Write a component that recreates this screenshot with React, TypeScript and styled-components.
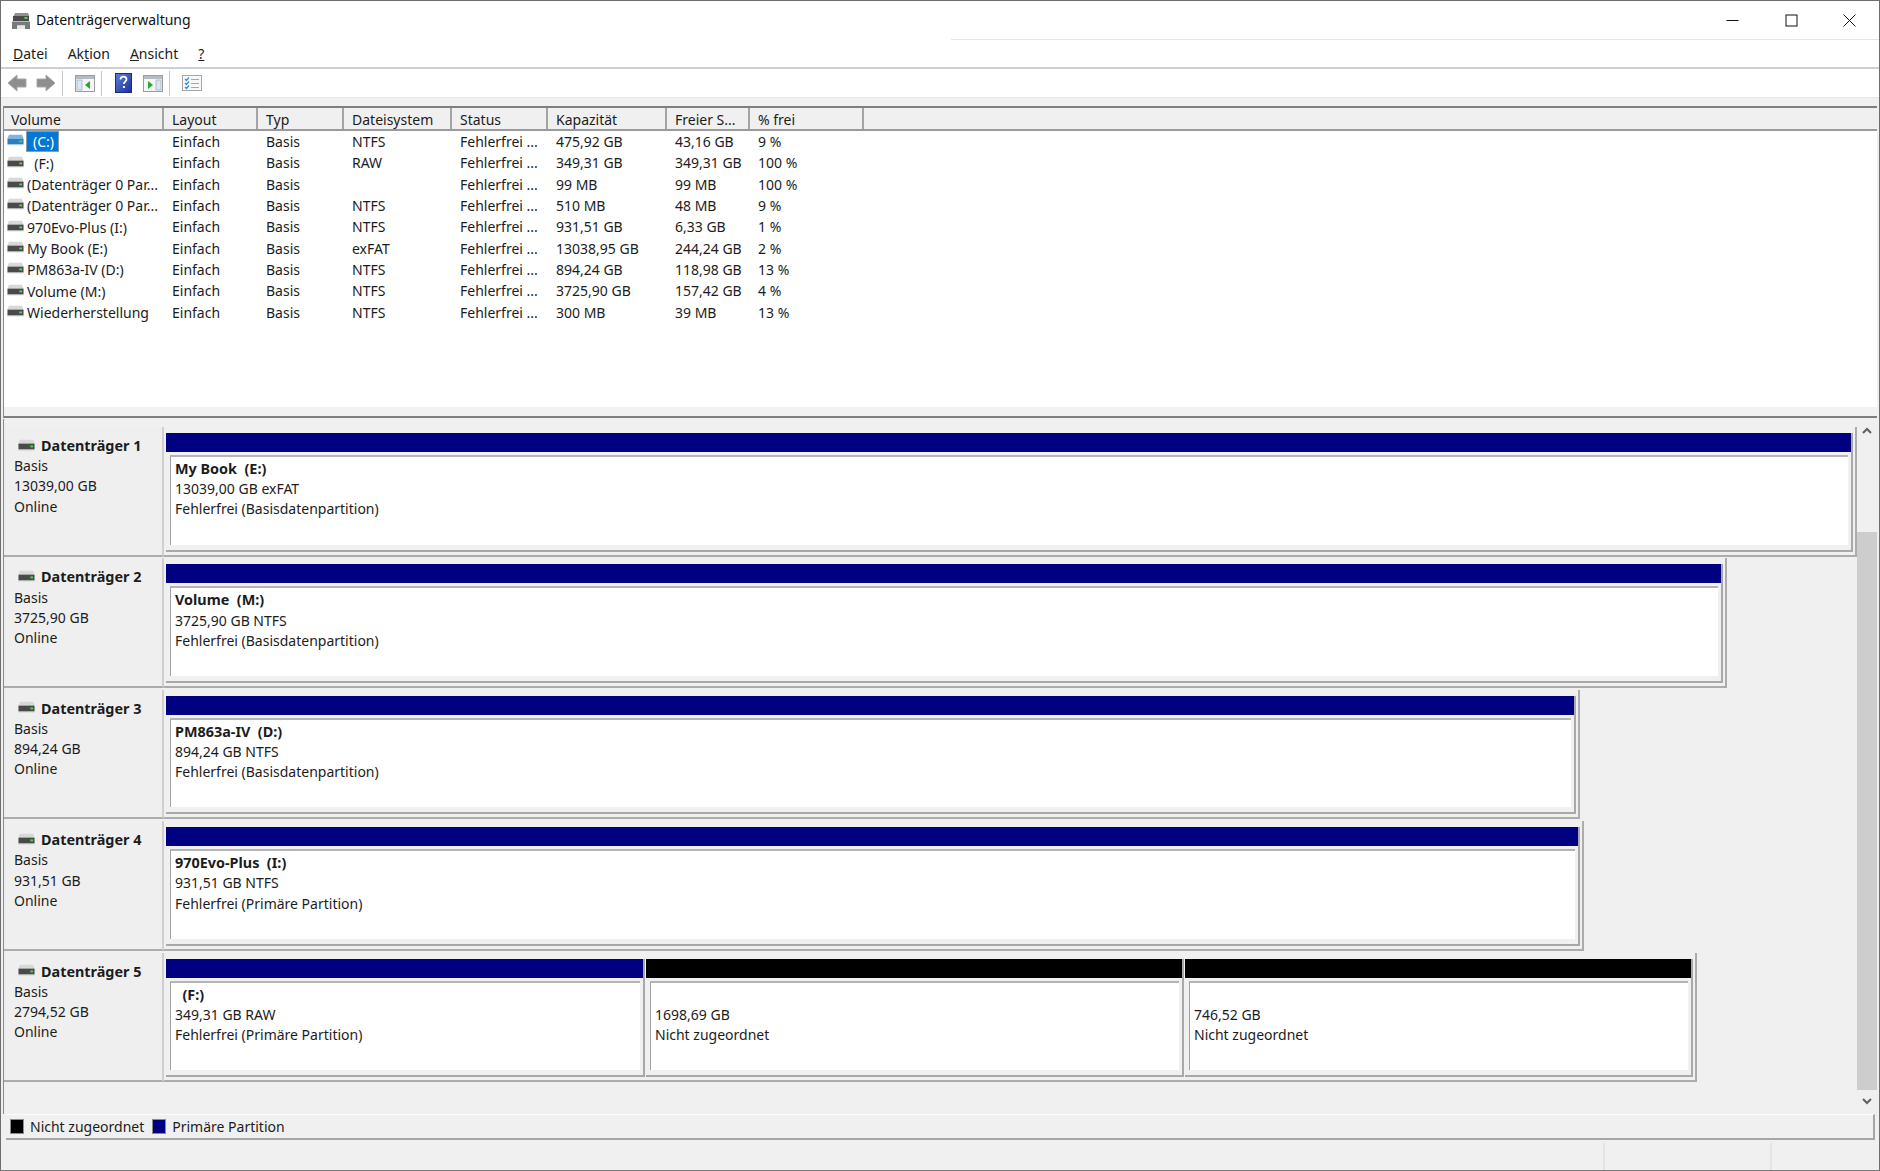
import styled, { createGlobalStyle } from 'styled-components'

const GlobalStyle = createGlobalStyle`
  html, body {
    margin: 0;
    padding: 0;
    background: #fff;
  }
  * {
    box-sizing: border-box;
  }
`

const COLUMNS = '160px 94px 86px 108px 96px 119px 83px 114px'

const Window = styled.div`
  width: 1880px;
  height: 1171px;
  display: flex;
  flex-direction: column;
  overflow: hidden;
  background: #f0f0f0;
  border: 1px solid #6e6e6e;
  border-bottom-color: #7a7a7a;
  font-family: 'Noto Sans', 'Open Sans', sans-serif;
  font-size: 14px;
  color: #1c1c1c;
`

const TitleBar = styled.div`
  height: 39px;
  flex: none;
  background: #fff;
  display: flex;
  align-items: center;
  padding-left: 10px;
`

const Title = styled.span`
  flex: 1;
  color: #111;
  margin-left: 5px;
  padding-bottom: 2px;
`

const WinButton = styled.div`
  width: 58.5px;
  height: 38px;
  display: flex;
  align-items: center;
  justify-content: center;
`

const MenuBar = styled.div`
  height: 29px;
  flex: none;
  background: #fff;
  display: flex;
  align-items: center;
  padding-left: 12px;
  border-bottom: 2px solid #cbd0d5;
`

const MenuItem = styled.span<{ $gap: number }>`
  margin-right: ${p => p.$gap}px;
`

const MenuRule = styled.div`
  margin-left: auto;
  margin-top: -1px;
  width: 928px;
  align-self: stretch;
  border-top: 1px solid #e6e6e6;
`

const Toolbar = styled.div`
  height: 29px;
  flex: none;
  background: #fff;
  display: flex;
  align-items: center;
  padding-left: 6px;
  border-bottom: 1px solid #e6e6e6;
`

const ToolIcon = styled.svg<{ $left?: number }>`
  display: block;
  flex: none;
  margin-left: ${p => p.$left ?? 0}px;
`

const ToolSep = styled.div<{ $left: number }>`
  width: 1px;
  height: 25px;
  flex: none;
  margin-left: ${p => p.$left}px;
  background: #c6c6c6;
`

const Content = styled.div`
  flex: 1;
  min-height: 0;
  display: flex;
  flex-direction: column;
  padding: 8px 2px 0 2px;
`

const ListPane = styled.div`
  height: 312px;
  flex: none;
  background: #fff;
  border-left: 1px solid #8a8a8a;
  border-bottom: 2px solid #7f7f7f;
  display: flex;
  flex-direction: column;
`

const Header = styled.div`
  display: grid;
  grid-template-columns: ${COLUMNS};
  height: 25px;
  flex: none;
  background: #f0f0f0;
  border-top: 2px solid #7f7f7f;
  border-bottom: 2px solid #9a9a9a;
`

const HeaderCell = styled.div`
  padding: 1px 0 0 8px;
  line-height: 22px;
  border-right: 2px solid #a4a4a4;
  white-space: nowrap;
  overflow: hidden;

  &:first-child {
    padding-left: 7px;
  }
`

const Row = styled.div`
  display: grid;
  grid-template-columns: ${COLUMNS};
  height: 21.35px;
  flex: none;
  line-height: 21px;
`

const VolumeCell = styled.div`
  display: flex;
  align-items: center;
  padding-left: 3px;
  gap: 3px;
  white-space: pre;
  overflow: hidden;
`

const Selected = styled.span`
  background: #0078d7;
  color: #fff;
  border: 1px solid #8f9aa3;
  margin-left: -1px;
  padding: 0 4px 0 6px;
  height: 21px;
  line-height: 19px;
`

const Cell = styled.div`
  padding-left: 8px;
  white-space: nowrap;
`

const FlatFill = styled.div`
  flex: 1;
  background: #fff;
`

const ListFoot = styled.div`
  height: 9px;
  flex: none;
  background: #f2f2f2;
`

const LowerPane = styled.div`
  flex: 1;
  min-height: 0;
  display: flex;
  border-left: 1px solid #8a8a8a;
  margin-top: 1px;
`

const DiskList = styled.div`
  flex: 1;
  padding-top: 8px;
`

const DiskRow = styled.div`
  display: flex;
  height: 131.4px;
`

const DiskLabel = styled.div`
  width: 160px;
  height: 129.5px;
  flex: none;
  padding: 10px 0 0 10px;
  line-height: 20.2px;
  border-bottom: 2px solid #acacac;
  border-right: 2px solid #cfcfcf;
  background: #efefef;
`

const DiskName = styled.div`
  display: flex;
  align-items: center;
  gap: 6px;
  font-weight: 700;
  font-size: 14.4px;
  padding-left: 4px;
  margin-top: -1px;
`

const DiskFrame = styled.div`
  display: flex;
  height: 129.5px;
  padding: 6px 2px 3px 2px;
  border-right: 2px solid #acacac;
  border-bottom: 2px solid #acacac;
`

const Partition = styled.div<{ $width: number }>`
  width: ${p => p.$width}px;
  display: flex;
  flex-direction: column;
  border-right: 2px solid #a8a8a8;
  border-bottom: 2px solid #a8a8a8;
  margin-right: 1px;

  &:last-child {
    margin-right: 0;
  }
`

const Bar = styled.div<{ $color: string }>`
  height: 19px;
  flex: none;
  background: ${p => p.$color};
`

const PartitionBody = styled.div`
  flex: 1;
  margin: 3px 3px 5px 4px;
  background: #fff;
  border-top: 2px solid #b4b4b4;
  border-left: 1px solid #a2a2a2;
  padding: 2px 0 0 4px;
  line-height: 20.2px;
  white-space: pre;
`

const PartitionName = styled.div`
  font-weight: 700;
  font-size: 14.4px;
  height: 20.2px;
`

const Scrollbar = styled.div`
  width: 20px;
  flex: none;
  margin-right: 1px;
  display: flex;
  flex-direction: column;
  align-items: center;
  background: #f0f0f0;
  padding-top: 113px;
  position: relative;
`

const ScrollThumb = styled.div`
  width: 20px;
  height: 558px;
  background: #cdcdcd;
`

const ScrollArrow = styled.svg<{ $top: number }>`
  position: absolute;
  left: 5px;
  top: ${p => p.$top}px;
`

const Legend = styled.div`
  height: 26px;
  flex: none;
  margin-left: 3px;
  margin-right: 2px;
  display: flex;
  align-items: center;
  padding-left: 4px;
  border-top: 1px solid #fbfbfb;
  border-bottom: 2px solid #a6a6a6;
  border-right: 2px solid #a6a6a6;
`

const Swatch = styled.span<{ $color: string }>`
  width: 14px;
  height: 15px;
  flex: none;
  background: ${p => p.$color};
  border: 1px solid #8c8c8c;
  margin-right: 6px;
`

const LegendText = styled.span`
  margin-right: 8px;
`

const StatusBar = styled.div`
  height: 30px;
  flex: none;
  display: flex;
  justify-content: flex-end;
  padding-top: 3px;
`

const StatusCell = styled.div<{ $width: number }>`
  width: ${p => p.$width}px;
  border-left: 2px solid #e4e4e4;
`

type VolumeRow = [string, string, string, string, string]

const volumes: VolumeRow[] = [
  ['  (C:)', 'NTFS', '475,92 GB', '43,16 GB', '9 %'],
  ['  (F:)', 'RAW', '349,31 GB', '349,31 GB', '100 %'],
  ['(Datenträger 0 Par...', '', '99 MB', '99 MB', '100 %'],
  ['(Datenträger 0 Par...', 'NTFS', '510 MB', '48 MB', '9 %'],
  ['970Evo-Plus (I:)', 'NTFS', '931,51 GB', '6,33 GB', '1 %'],
  ['My Book (E:)', 'exFAT', '13038,95 GB', '244,24 GB', '2 %'],
  ['PM863a-IV (D:)', 'NTFS', '894,24 GB', '118,98 GB', '13 %'],
  ['Volume (M:)', 'NTFS', '3725,90 GB', '157,42 GB', '4 %'],
  ['Wiederherstellung', 'NTFS', '300 MB', '39 MB', '13 %'],
]

const NAVY = '#000080'

type Part = { width: number; color: string; name: string; size: string; state: string }

const disks: { name: string; size: string; parts: Part[] }[] = [
  {
    name: 'Datenträger 1',
    size: '13039,00 GB',
    parts: [{ width: 1687, color: NAVY, name: 'My Book  (E:)', size: '13039,00 GB exFAT', state: 'Fehlerfrei (Basisdatenpartition)' }],
  },
  {
    name: 'Datenträger 2',
    size: '3725,90 GB',
    parts: [{ width: 1557, color: NAVY, name: 'Volume  (M:)', size: '3725,90 GB NTFS', state: 'Fehlerfrei (Basisdatenpartition)' }],
  },
  {
    name: 'Datenträger 3',
    size: '894,24 GB',
    parts: [{ width: 1410, color: NAVY, name: 'PM863a-IV  (D:)', size: '894,24 GB NTFS', state: 'Fehlerfrei (Basisdatenpartition)' }],
  },
  {
    name: 'Datenträger 4',
    size: '931,51 GB',
    parts: [{ width: 1414, color: NAVY, name: '970Evo-Plus  (I:)', size: '931,51 GB NTFS', state: 'Fehlerfrei (Primäre Partition)' }],
  },
  {
    name: 'Datenträger 5',
    size: '2794,52 GB',
    parts: [
      { width: 479, color: NAVY, name: '  (F:)', size: '349,31 GB RAW', state: 'Fehlerfrei (Primäre Partition)' },
      { width: 538, color: '#000', name: '', size: '1698,69 GB', state: 'Nicht zugeordnet' },
      { width: 508, color: '#000', name: '', size: '746,52 GB', state: 'Nicht zugeordnet' },
    ],
  },
]

const DriveIcon = ({ selected }: { selected?: boolean }) => (
  <svg width="17" height="12" viewBox="0 0 18 12" style={{ flex: 'none', marginTop: -3 }}>
    <path d="M2 0.5h14l1.5 4h-17z" fill={selected ? '#7cb6e6' : '#d8d8d8'} />
    <rect x="0.5" y="4.5" width="17" height="6" fill={selected ? '#2f7fc0' : '#4a4a4a'} />
    <rect x="0.5" y="10.5" width="17" height="1" fill={selected ? '#9cc8ea' : '#a8a8a8'} />
    <rect x="13" y="6.5" width="3" height="2" fill="#55d04a" />
  </svg>
)

const AppIcon = () => (
  <svg width="20" height="18" viewBox="0 0 20 18" style={{ flex: 'none' }}>
    <path d="M4 1h13l1.5 3.5h-16z" fill="#8f9193" />
    <rect x="2" y="4" width="16" height="5" fill="#4a4a4a" />
    <rect x="13.5" y="5" width="3" height="2" fill="#55d04a" />
    <path d="M1 9.5h18v7.5h-5v-3.5H6v3.5H1z" fill="#77797b" />
    <rect x="6" y="13.5" width="8" height="3.5" fill="#e8e8e8" />
  </svg>
)

const BackIcon = ({ flip, left }: { flip?: boolean; left: number }) => (
  <ToolIcon $left={left} width="20" height="18" viewBox="0 0 20 18">
    <path
      d={flip ? 'M1 5h9V1l9 8-9 8v-4H1z' : 'M19 5h-9V1L1 9l9 8v-4h9z'}
      fill="#8e8e8e"
      stroke="#a8a8a8"
      strokeWidth="1"
    />
  </ToolIcon>
)

const PaneIcon = ({ left, mirrored }: { left: number; mirrored?: boolean }) => (
  <ToolIcon $left={left} width="20" height="17" viewBox="0 0 20 17">
    <rect x="0.5" y="0.5" width="19" height="16" fill="#f4f6f8" stroke="#9c9c9c" />
    <rect x="1" y="1" width="18" height="3" fill="#b4bcc4" />
    {mirrored ? (
      <>
        <path d="M5 6l5 4-5 4z" fill="#2fa52f" />
        <rect x="13" y="5" width="5" height="10" fill="#dde6f0" stroke="#8aa0b8" strokeWidth="0.6" />
      </>
    ) : (
      <>
        <rect x="2" y="5" width="5" height="10" fill="#dde6f0" stroke="#8aa0b8" strokeWidth="0.6" />
        <path d="M15 6l-5 4 5 4z" fill="#2fa52f" />
      </>
    )}
  </ToolIcon>
)

const HelpIcon = ({ left }: { left: number }) => (
  <ToolIcon $left={left} width="17" height="20" viewBox="0 0 17 20">
    <defs>
      <linearGradient id="helpFill" x1="0" y1="0" x2="1" y2="1">
        <stop offset="0" stopColor="#5f7fe0" />
        <stop offset="1" stopColor="#1c2f96" />
      </linearGradient>
    </defs>
    <rect x="0.5" y="0.5" width="16" height="19" fill="url(#helpFill)" stroke="#1a2a80" />
    <path
      d="M5.5 6.5c0-1.8 1.3-2.8 3-2.8s3 1 3 2.6c0 2.2-2.6 2.4-2.6 4.6"
      fill="none"
      stroke="#fff"
      strokeWidth="1.8"
    />
    <rect x="7.9" y="13" width="2" height="2" fill="#fff" />
  </ToolIcon>
)

const CheckListIcon = ({ left }: { left: number }) => (
  <ToolIcon $left={left} width="20" height="16" viewBox="0 0 20 16">
    <rect x="0.5" y="0.5" width="19" height="15" fill="#f6f8fa" stroke="#a6a6a6" />
    <path d="M3 4l1.5 1.5L7 2.5M3 8l1.5 1.5L7 6.5M3 12l1.5 1.5L7 10.5" fill="none" stroke="#3c8fdc" strokeWidth="1.2" />
    <path d="M9 4.5h8M9 8.5h8M9 12.5h8" stroke="#a8a8a8" strokeWidth="1.2" />
  </ToolIcon>
)

const App = () => {
  return (
    <>
      <GlobalStyle />
      <Window>
        <TitleBar>
          <AppIcon />
          <Title>Datenträgerverwaltung</Title>
          <WinButton>
            <svg width="13" height="13" viewBox="0 0 13 13">
              <path d="M0.5 6.5h12" stroke="#111" fill="none" />
            </svg>
          </WinButton>
          <WinButton>
            <svg width="13" height="13" viewBox="0 0 13 13">
              <rect x="1" y="1" width="11" height="11" stroke="#111" fill="none" />
            </svg>
          </WinButton>
          <WinButton>
            <svg width="13" height="13" viewBox="0 0 13 13">
              <path d="M0.5 0.5l12 12M12.5 0.5l-12 12" stroke="#111" fill="none" />
            </svg>
          </WinButton>
        </TitleBar>
        <MenuBar>
          <MenuItem $gap={20}><u>D</u>atei</MenuItem>
          <MenuItem $gap={20}>Ak<u>t</u>ion</MenuItem>
          <MenuItem $gap={20}><u>A</u>nsicht</MenuItem>
          <MenuItem $gap={0}><u>?</u></MenuItem>
          <MenuRule />
        </MenuBar>
        <Toolbar>
          <BackIcon left={0} />
          <BackIcon flip left={9} />
          <ToolSep $left={6} />
          <PaneIcon left={12} />
          <ToolSep $left={6} />
          <HelpIcon left={13} />
          <PaneIcon mirrored left={11} />
          <ToolSep $left={6} />
          <CheckListIcon left={12} />
        </Toolbar>
        <Content>
          <ListPane>
            <Header>
              {['Volume', 'Layout', 'Typ', 'Dateisystem', 'Status', 'Kapazität', 'Freier S...', '% frei'].map(h => (
                <HeaderCell key={h}>{h}</HeaderCell>
              ))}
            </Header>
            {volumes.map(([name, fs, cap, free, pct], i) => (
              <Row key={i}>
                <VolumeCell>
                  <DriveIcon selected={i === 0} />
                  {i === 0 ? <Selected>(C:)</Selected> : name}
                </VolumeCell>
                <Cell>Einfach</Cell>
                <Cell>Basis</Cell>
                <Cell>{fs}</Cell>
                <Cell>Fehlerfrei ...</Cell>
                <Cell>{cap}</Cell>
                <Cell>{free}</Cell>
                <Cell>{pct}</Cell>
              </Row>
            ))}
            <FlatFill />
            <ListFoot />
          </ListPane>
          <LowerPane>
            <DiskList>
              {disks.map(d => (
                <DiskRow key={d.name}>
                  <DiskLabel>
                    <DiskName>
                      <DriveIcon />
                      {d.name}
                    </DiskName>
                    <div>Basis</div>
                    <div>{d.size}</div>
                    <div>Online</div>
                  </DiskLabel>
                  <DiskFrame>
                    {d.parts.map((p, i) => (
                      <Partition key={i} $width={p.width}>
                        <Bar $color={p.color} />
                        <PartitionBody>
                          <PartitionName>{p.name}</PartitionName>
                          <div>{p.size}</div>
                          <div>{p.state}</div>
                        </PartitionBody>
                      </Partition>
                    ))}
                  </DiskFrame>
                </DiskRow>
              ))}
            </DiskList>
            <Scrollbar>
              <ScrollArrow $top={8} width="10" height="7" viewBox="0 0 10 7">
                <path d="M1 6l4-4 4 4" fill="none" stroke="#606060" strokeWidth="2" />
              </ScrollArrow>
              <ScrollThumb />
              <ScrollArrow $top={679} width="10" height="7" viewBox="0 0 10 7">
                <path d="M1 1l4 4 4-4" fill="none" stroke="#606060" strokeWidth="2" />
              </ScrollArrow>
            </Scrollbar>
          </LowerPane>
          <Legend>
            <Swatch $color="#000" />
            <LegendText>Nicht zugeordnet</LegendText>
            <Swatch $color={NAVY} />
            <LegendText>Primäre Partition</LegendText>
          </Legend>
          <StatusBar>
            <StatusCell $width={167} />
            <StatusCell $width={107} />
          </StatusBar>
        </Content>
      </Window>
    </>
  )
}

export default App
